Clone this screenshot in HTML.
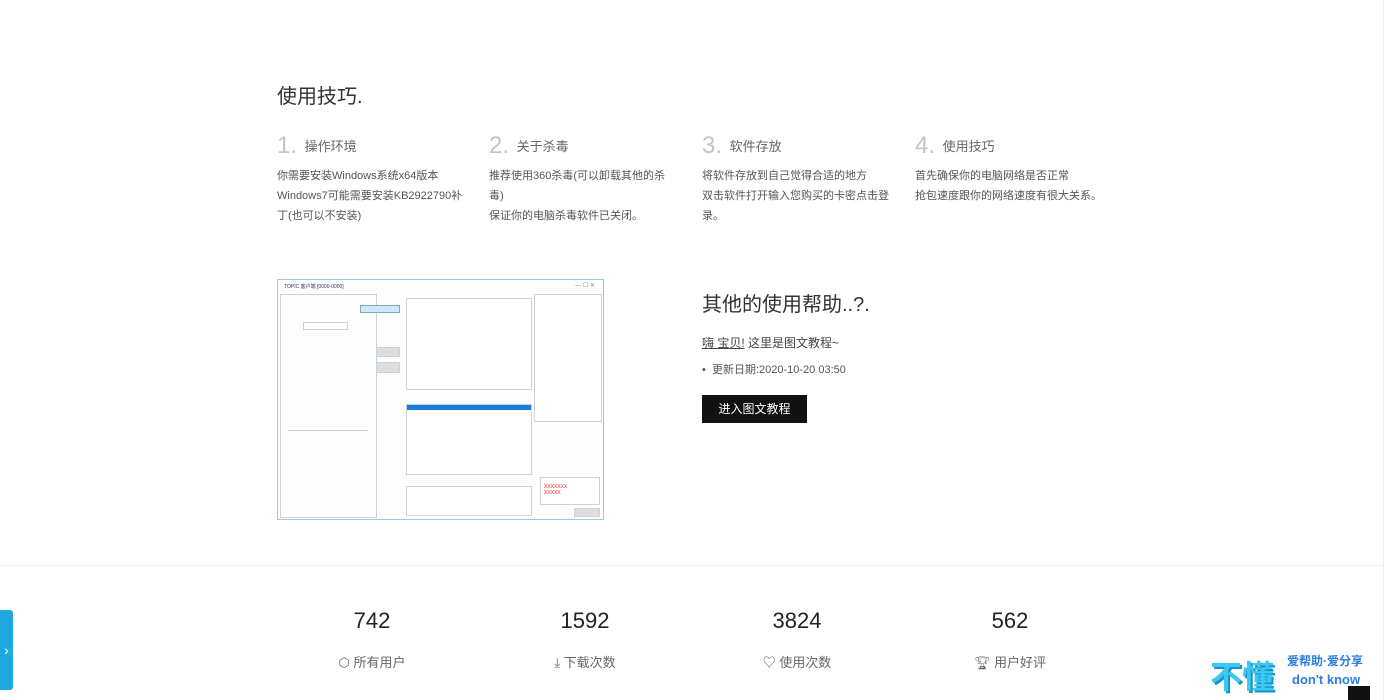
<!DOCTYPE html>
<html><head><meta charset="utf-8"><style>
*{margin:0;padding:0;box-sizing:border-box}
body{width:1386px;height:700px;overflow:hidden;background:#fff;font-family:"Liberation Sans","Noto Sans CJK SC",sans-serif;color:#333;position:relative}
.a{position:absolute}
h2{font-weight:normal;font-size:20px;color:#333}
.col{position:absolute;top:131px;width:192px}
.col .t{font-size:13px;color:#666;height:30px;line-height:30px}
.col .t b{font-weight:normal;font-size:24px;color:#c4c4c4;margin-right:4px;vertical-align:-2px}
.col p{font-size:11px;color:#555;line-height:20px;margin-top:5px;word-break:break-all}
.st{position:absolute;top:608px;width:140px;text-align:center}
.st .n{font-size:22px;color:#222;height:30px}
.st .l{font-size:13px;color:#666;margin-top:14px}
.win{position:absolute;left:277px;top:279px;width:327px;height:241px;border:1px solid #9cc9e6;background:#fdfdfd}
.b{position:absolute;border:1px solid #c9d3dc}
</style></head><body>
<div class="a" style="left:1383px;top:0;width:1px;height:700px;background:#eee"></div>
<h2 class="a" style="left:277px;top:80px">使用技巧.</h2>
<div class="col" style="left:277px"><div class="t"><b>1.</b> 操作环境</div><p>你需要安装Windows系统x64版本<br>Windows7可能需要安装KB2922790补丁(也可以不安装)</p></div>
<div class="col" style="left:489px;width:184px"><div class="t"><b>2.</b> 关于杀毒</div><p>推荐使用360杀毒(可以卸载其他的杀毒)<br>保证你的电脑杀毒软件已关闭。</p></div>
<div class="col" style="left:702px"><div class="t"><b>3.</b> 软件存放</div><p>将软件存放到自己觉得合适的地方<br>双击软件打开输入您购买的卡密点击登录。</p></div>
<div class="col" style="left:915px;width:200px"><div class="t"><b>4.</b> 使用技巧</div><p>首先确保你的电脑网络是否正常<br>抢包速度跟你的网络速度有很大关系。</p></div>

<div class="win">
<div class="a" style="left:6px;top:3px;font-size:5px;color:#335">TOPIC 客户端 [0000-0000]</div>
<div class="a" style="right:8px;top:2px;font-size:6px;color:#888">— ☐ ✕</div>
<div class="b" style="left:2px;top:14px;width:97px;height:224px"></div>
<div class="b" style="left:82px;top:25px;width:40px;height:8px;background:#cfe6f7;border-color:#7ab"></div>
<div class="b" style="left:25px;top:42px;width:45px;height:8px;background:#fff"></div>
<div class="b" style="left:98px;top:67px;width:24px;height:10px;background:#ddd"></div>
<div class="b" style="left:98px;top:82px;width:24px;height:11px;background:#ddd"></div>
<div class="b" style="left:128px;top:18px;width:126px;height:92px;background:#fff"></div>
<div class="b" style="left:128px;top:124px;width:126px;height:71px;background:#fff"></div>
<div class="a" style="left:129px;top:125px;width:124px;height:5px;background:#1a7ed6"></div>
<div class="b" style="left:128px;top:206px;width:126px;height:30px;background:#fff"></div>
<div class="b" style="left:256px;top:14px;width:68px;height:128px;background:#fff"></div>
<div class="b" style="left:262px;top:197px;width:60px;height:28px;background:#fff"></div>
<div class="a" style="left:266px;top:204px;font-size:5px;color:#e22;line-height:6px">XXXXXXX<br>XXXXX</div>
<div class="b" style="left:296px;top:228px;width:26px;height:9px;background:#ddd"></div>
<div class="a" style="left:10px;top:150px;width:80px;height:70px;border-top:1px solid #ccd"></div>
</div>

<h2 class="a" style="left:702px;top:288px">其他的使用帮助..?.</h2>
<div class="a" style="left:702px;top:334px;font-size:12px;color:#444"><u>嗨 宝贝!</u> 这里是图文教程~</div>
<div class="a" style="left:702px;top:361px;font-size:11px;color:#555">• &nbsp;更新日期:2020-10-20 03:50</div>
<div class="a" style="left:702px;top:395px;width:105px;height:28px;background:#111;color:#fff;font-size:12px;text-align:center;line-height:28px">进入图文教程</div>

<div class="a" style="left:0;top:565px;width:1383px;height:1px;background:#eee"></div>
<div class="st" style="left:302px"><div class="n">742</div><div class="l">⬡ 所有用户</div></div>
<div class="st" style="left:515px"><div class="n">1592</div><div class="l">⤓ 下载次数</div></div>
<div class="st" style="left:727px"><div class="n">3824</div><div class="l">♡ 使用次数</div></div>
<div class="st" style="left:940px"><div class="n">562</div><div class="l">🏆︎ 用户好评</div></div>

<div class="a" style="left:0;top:610px;width:13px;height:80px;background:#1ea9e1;border-radius:0 3px 3px 0;color:#fff;font-size:14px;line-height:80px;text-align:center">›</div>
<div class="a" style="left:1210px;top:652px;font-size:32px;font-weight:bold;color:#3cc8f0;text-shadow:2px 2px 0 #1a8fd0">不懂</div>
<div class="a" style="left:1287px;top:652px;font-size:12px;font-weight:bold;color:#2a7fe0">爱帮助·爱分享</div>
<div class="a" style="left:1292px;top:672px;font-size:13px;font-weight:bold;color:#2a7fe0">don't know</div>
<div class="a" style="left:1348px;top:686px;width:22px;height:14px;background:#111"></div>
</body></html>
